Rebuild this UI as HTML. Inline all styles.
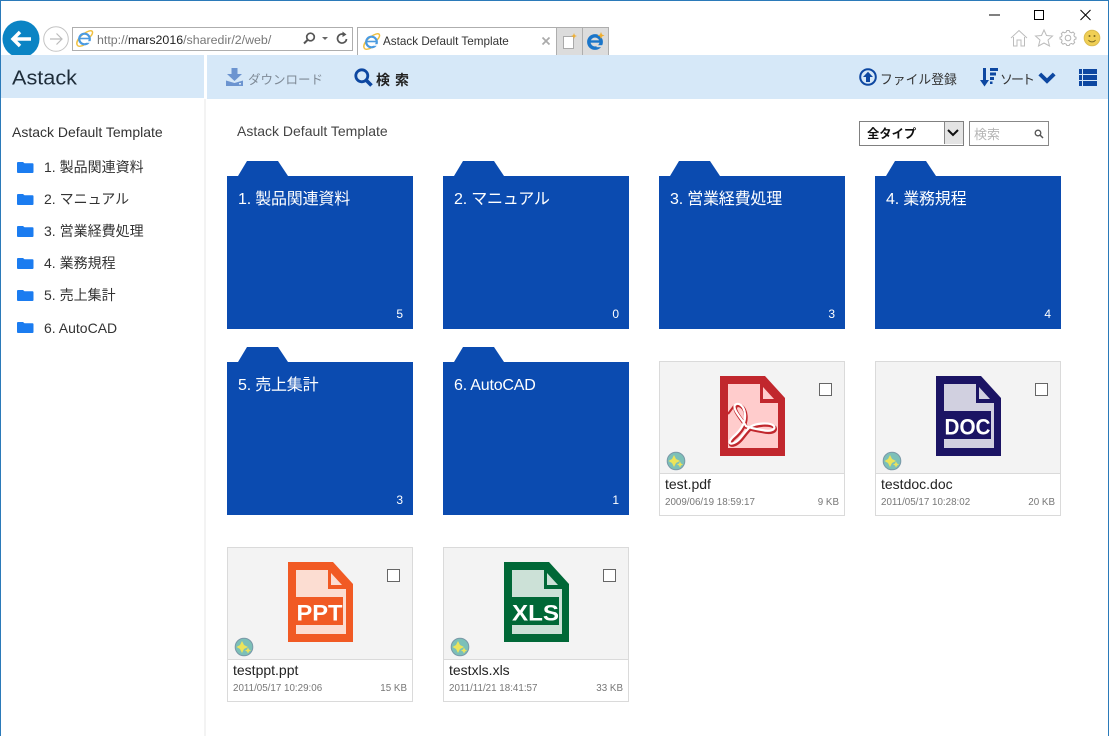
<!DOCTYPE html>
<html><head><meta charset="utf-8"><title>Astack Default Template</title>
<style>
html,body{margin:0;padding:0;width:1109px;height:736px;overflow:hidden;background:#fff}
body{position:relative;font-family:"Liberation Sans","Noto Sans CJK JP",sans-serif;color:#333}
.a,.f,.c,.t{position:absolute}
.t{white-space:nowrap;line-height:18px}
.f{width:186px;height:153px;background:#0b4bb0}
.f:before{content:"";position:absolute;left:11px;top:-15px;width:50px;height:15px;background:#0b4bb0;clip-path:polygon(0 100%,9px 0,40px 0,100% 100%)}
.f b{position:absolute;left:11px;top:14px;font-weight:400;font-size:16px;line-height:20px;color:#fff;white-space:nowrap;letter-spacing:-.2px}
.f i{position:absolute;right:10px;bottom:8px;font-style:normal;font-size:12px;line-height:14px;color:#fff}
.c{width:184px;height:153px;border:1px solid #dadada;background:#fff}
.c .g{position:absolute;left:0;top:0;width:184px;height:111px;background:#f3f3f3;border-bottom:1px solid #dadada}
.c svg.i{position:absolute;left:60px;top:14px}
.c .k{position:absolute;left:159px;top:21px;width:11px;height:11px;border:1px solid #666;background:#fff}
.c svg.b{position:absolute;left:6px;top:89px}
.c .n{position:absolute;left:5px;top:113px;font-size:14px;line-height:18px;color:#222}
.c .d{position:absolute;left:5px;top:134px;font-size:9.8px;line-height:13px;color:#777}
.c .s{position:absolute;right:5px;top:134px;font-size:9.8px;line-height:13px;color:#777}
.l{position:absolute;left:44px;font-size:14px;line-height:18px;color:#333;white-space:nowrap}
.fi{position:absolute;left:17px}
</style></head><body>
<!-- window border -->
<div class="a" style="left:0;top:0;width:1109px;height:1px;background:#2b7ab9"></div>
<div class="a" style="left:0;top:0;width:1px;height:736px;background:#2b7ab9"></div>
<div class="a" style="right:0;top:0;width:1px;height:736px;background:#2b7ab9"></div>

<!-- back/forward -->
<svg class="a" style="left:0;top:18px" width="72" height="38" viewBox="0 0 72 38">
<circle cx="21" cy="21" r="18.500" fill="#0b84c4"/>
<path d="M12.500 21H31M20 14L13 21L20 28" fill="none" stroke="#fff" stroke-width="3.500"/>
<circle cx="56" cy="21" r="12.300" fill="#fff" stroke="#c4c4c4"/>
<path d="M50 21H61M56.500 15.500L62 21L56.500 26.500" fill="none" stroke="#bbb" stroke-width="1.200"/>
</svg>
<!-- address bar -->
<div class="a" style="left:72px;top:27px;width:279px;height:22px;border:1px solid #aeaeae;background:#fff"></div>
<svg class="a" style="left:76px;top:30px" width="18" height="18" viewBox="0 0 18 18">
<path d="M1.500 15.500C-1 12 4 6 9 3C13 .5 16 0 16.500 2C16.800 3.500 15.500 5.500 14 7M1.500 15.500C3 17 6 16 8 15" fill="none" stroke="#f0c040" stroke-width="1.500"/>
<circle cx="8.500" cy="9" r="5.300" fill="none" stroke="#4a9ae0" stroke-width="2.200"/>
<path d="M4 8.500H13" stroke="#4a9ae0" stroke-width="1.600"/>
<path d="M14.500 12H10.500" stroke="#fff" stroke-width="1.600"/>
</svg>
<div class="t" style="left:97px;top:31px;font-size:12.400px;color:#777">http://<span style="color:#222">mars2016</span>/sharedir/2/web/</div>
<svg class="a" style="left:302px;top:30px" width="48" height="17" viewBox="0 0 48 17">
<circle cx="8.500" cy="7" r="3.800" fill="none" stroke="#555" stroke-width="1.700"/><path d="M5.500 10L2 13.500" stroke="#555" stroke-width="2"/>
<path d="M20 7H26L23 10Z" fill="#666"/>
<path d="M44.500 9A4.500 4.500 0 1 1 42 4.500" fill="none" stroke="#555" stroke-width="1.700"/><path d="M40.500 1.500L44.500 4.500L40.500 7Z" fill="#555"/>
</svg>
<!-- tab -->
<div class="a" style="left:357px;top:27px;width:199px;height:28px;border:1px solid #aeaeae;border-bottom:0;background:#fff;box-sizing:content-box"></div>
<svg class="a" style="left:363px;top:33px" width="18" height="18" viewBox="0 0 18 18">
<path d="M1.500 15.500C-1 12 4 6 9 3C13 .5 16 0 16.500 2C16.800 3.500 15.500 5.500 14 7M1.500 15.500C3 17 6 16 8 15" fill="none" stroke="#f0c040" stroke-width="1.500"/>
<circle cx="8.500" cy="9" r="5.300" fill="none" stroke="#4a9ae0" stroke-width="2.200"/>
<path d="M4 8.500H13" stroke="#4a9ae0" stroke-width="1.600"/>
<path d="M14.500 12H10.500" stroke="#fff" stroke-width="1.600"/>
</svg>
<div class="t" style="left:383px;top:33px;font-size:11.700px;color:#333">Astack Default Template</div>
<svg class="a" style="left:541px;top:36px" width="11" height="11" viewBox="0 0 11 11"><path d="M1.500 1.500L8.500 8.500M8.500 1.500L1.500 8.500" stroke="#aaa" stroke-width="1.700"/></svg>
<div class="a" style="left:556px;top:27px;width:53px;height:28px;background:#dcdcdc;border:1px solid #aeaeae;border-bottom:0;box-sizing:border-box"></div>
<div class="a" style="left:582px;top:27px;width:1px;height:28px;background:#aeaeae"></div>
<svg class="a" style="left:557px;top:28px" width="52" height="26" viewBox="0 0 52 26">
<path d="M6.500 8.500H16.500V20.500H6.500Z" fill="#fff" stroke="#aaa"/>
<path d="M17 5L17.800 7.200L20 8L17.800 8.800L17 11L16.200 8.800L14 8L16.200 7.200Z" fill="#f0ae2e"/>
<circle cx="38" cy="14" r="6.200" fill="none" stroke="#1a75c9" stroke-width="3.400"/>
<path d="M31 13.500H44" stroke="#1a75c9" stroke-width="2.400"/>
<path d="M39.500 18.200H46" stroke="#dcdcdc" stroke-width="2"/>
<path d="M44 4L45 6.500L47.500 7.500L45 8.500L44 11L43 8.500L40.500 7.500L43 6.500Z" fill="#f0ae2e"/>
</svg>
<!-- window controls -->
<svg class="a" style="left:985px;top:6px" width="112" height="20" viewBox="0 0 112 20">
<path d="M4 9H15" stroke="#000"/>
<rect x="49.500" y="4.500" width="9" height="9" fill="none" stroke="#000"/>
<path d="M95.500 4L105.500 14M105.500 4L95.500 14" stroke="#000"/>
</svg>
<!-- IE toolbar icons -->
<svg class="a" style="left:1009px;top:27px" width="96" height="22" viewBox="0 0 96 22">
<path d="M2 11L10 3.500L18 11M4.500 10V19H8V13H12V19H15.500V10" fill="none" stroke="#bcbcbc" stroke-width="1"/>
<path d="M35 3L37.500 8.500L43.500 9L39 13L40.500 19L35 16L29.500 19L31 13L26.500 9L32.500 8.500Z" fill="none" stroke="#bcbcbc" stroke-width="1"/>
<circle cx="59" cy="11" r="2.800" fill="none" stroke="#b5b5b5"/>
<path d="M57.800 4.500H60.200L60.700 6L62.500 6.800L64 6L65.700 7.700L64.900 9.200L65.500 10.700L67 11.200V13L65.500 13.500L64.900 15L65.700 16.500L64 18.200L62.500 17.400L60.700 18.200L60.200 19.500H57.800L57.300 18.200L55.500 17.400L54 18.200L52.300 16.500L53.100 15L52.500 13.500L51 13V11.200L52.500 10.700L53.100 9.200L52.300 7.700L54 6L55.500 6.800L57.300 6Z" fill="none" stroke="#b5b5b5" transform="translate(0 -1)"/>
<circle cx="83" cy="11" r="7.800" fill="#f0cf55" stroke="#dcbc50"/>
<circle cx="80.500" cy="9" r="1" fill="#7d6a20"/><circle cx="85.500" cy="9" r="1" fill="#7d6a20"/>
<path d="M79.500 13C81 15.500 85 15.500 86.500 13" fill="none" stroke="#7d6a20"/>
</svg>

<!-- app header -->
<div class="a" style="left:1px;top:55px;width:203px;height:43px;background:#d6e8f8"></div>
<div class="a" style="left:207px;top:55px;width:901px;height:44px;background:#d6e8f8"></div>
<svg class="a" style="left:10px;top:64px" width="72" height="28" viewBox="0 0 72 28"><text x="2" y="20.500" font-family="Liberation Sans,sans-serif" font-size="20" fill="#1f2d3a" textLength="65" lengthAdjust="spacingAndGlyphs">Astack</text></svg>
<svg class="a" style="left:225px;top:68px" width="20" height="19" viewBox="0 0 20 19">
<path d="M6.500 0H12.500V6H17L9.500 13L2 6H6.500Z" fill="#6c94d0"/>
<path d="M1 12.500L9.500 15L18 12.500V18H1Z" fill="#6c94d0"/>
<rect x="14" y="15" width="2" height="1.500" fill="#d6e8f8"/>
</svg>
<div class="t" style="left:248px;top:71px;font-size:12.500px;color:#7f8a96">ダウンロード</div>
<svg class="a" style="left:354px;top:68px" width="20" height="20" viewBox="0 0 20 20">
<circle cx="7.800" cy="7.800" r="6" fill="none" stroke="#0d47a1" stroke-width="2.800"/><path d="M12 12L17.500 17.500" stroke="#0d47a1" stroke-width="3.600"/>
</svg>
<div class="t" style="left:376px;top:71px;font-size:14px;font-weight:700;color:#222;letter-spacing:5px">検索</div>
<svg class="a" style="left:859px;top:68px" width="19" height="19" viewBox="0 0 19 19">
<circle cx="9" cy="9" r="7.800" fill="none" stroke="#0d47a1" stroke-width="2"/>
<path d="M9 3.800L14 9H11V14H7V9H4Z" fill="#0d47a1"/>
</svg>
<div class="t" style="left:880px;top:71px;font-size:12.800px;color:#333">ファイル登録</div>
<svg class="a" style="left:979px;top:68px" width="20" height="19" viewBox="0 0 20 19">
<path d="M4 0H7V12H10L5.500 18.500L1 12H4Z" fill="#0d47a1"/>
<path d="M11 0H19V3H11ZM11 4.500H17V7.500H11ZM11 9H15V12H11ZM11 13.500H13.500V16H11Z" fill="#0d47a1"/>
</svg>
<div class="t" style="left:1000px;top:71px;font-size:13px;color:#333;letter-spacing:-2px">ソート</div>
<svg class="a" style="left:1038px;top:71px" width="18" height="14" viewBox="0 0 18 14"><path d="M1.800 3L9 10L16.200 3" fill="none" stroke="#0d47a1" stroke-width="4"/></svg>
<svg class="a" style="left:1079px;top:69px" width="18" height="18" viewBox="0 0 18 18">
<path d="M0 0H3V5H0ZM4 0H18V5H4ZM0 6H3V11H0ZM4 6H18V11H4ZM0 12H3V17H0ZM4 12H18V17H4Z" fill="#0d47a1"/>
</svg>

<!-- sidebar -->
<div class="a" style="left:204px;top:99px;width:2px;height:637px;background:#f3f3f3"></div>
<div class="t" style="left:12px;top:123px;font-size:14px;color:#333">Astack Default Template</div>
<svg class="fi" style="top:160px" width="18" height="14" viewBox="0 0 18 14"><path d="M0 3Q0 2 1 2H6L7.500 3.200H15.500Q16.500 3.200 16.500 4.200V12Q16.500 13 15.500 13H1Q0 13 0 12Z" fill="#1b7cf0"/></svg>
<div class="l" style="top:158px">1. 製品関連資料</div>
<svg class="fi" style="top:192px" width="18" height="14" viewBox="0 0 18 14"><path d="M0 3Q0 2 1 2H6L7.500 3.200H15.500Q16.500 3.200 16.500 4.200V12Q16.500 13 15.500 13H1Q0 13 0 12Z" fill="#1b7cf0"/></svg>
<div class="l" style="top:190px">2. マニュアル</div>
<svg class="fi" style="top:224px" width="18" height="14" viewBox="0 0 18 14"><path d="M0 3Q0 2 1 2H6L7.500 3.200H15.500Q16.500 3.200 16.500 4.200V12Q16.500 13 15.500 13H1Q0 13 0 12Z" fill="#1b7cf0"/></svg>
<div class="l" style="top:222px">3. 営業経費処理</div>
<svg class="fi" style="top:256px" width="18" height="14" viewBox="0 0 18 14"><path d="M0 3Q0 2 1 2H6L7.500 3.200H15.500Q16.500 3.200 16.500 4.200V12Q16.500 13 15.500 13H1Q0 13 0 12Z" fill="#1b7cf0"/></svg>
<div class="l" style="top:254px">4. 業務規程</div>
<svg class="fi" style="top:288px" width="18" height="14" viewBox="0 0 18 14"><path d="M0 3Q0 2 1 2H6L7.500 3.200H15.500Q16.500 3.200 16.500 4.200V12Q16.500 13 15.500 13H1Q0 13 0 12Z" fill="#1b7cf0"/></svg>
<div class="l" style="top:286px">5. 売上集計</div>
<svg class="fi" style="top:320px" width="18" height="14" viewBox="0 0 18 14"><path d="M0 3Q0 2 1 2H6L7.500 3.200H15.500Q16.500 3.200 16.500 4.200V12Q16.500 13 15.500 13H1Q0 13 0 12Z" fill="#1b7cf0"/></svg>
<div class="l" style="top:319px">6. AutoCAD</div>

<!-- main -->
<div class="t" style="left:237px;top:122px;font-size:14px;color:#444">Astack Default Template</div>
<div class="a" style="left:859px;top:121px;width:103px;height:23px;border:1px solid #808080;background:#fff"></div>
<div class="t" style="left:867px;top:125px;font-size:12.300px;font-weight:700;color:#111">全タイプ</div>
<div class="a" style="left:944px;top:122px;width:18px;height:22px;background:#e4e4e4;border-left:1px solid #888"></div>
<svg class="a" style="left:946px;top:128px" width="14" height="10" viewBox="0 0 14 10"><path d="M2 2L7 7L12 2" fill="none" stroke="#111" stroke-width="2"/></svg>
<div class="a" style="left:969px;top:121px;width:78px;height:23px;border:1px solid #888;background:#fff"></div>
<div class="t" style="left:974px;top:126px;font-size:13px;color:#b5b5b5">検索</div>
<svg class="a" style="left:1034px;top:129px" width="10" height="10" viewBox="0 0 10 10"><circle cx="4" cy="4" r="2.800" fill="none" stroke="#555" stroke-width="1.300"/><path d="M6 6L9 9" stroke="#555" stroke-width="1.500"/></svg>

<div class="f" style="left:227px;top:176px"><b style="top:14px">1. 製品関連資料</b><i>5</i></div>
<div class="f" style="left:443px;top:176px"><b>2. マニュアル</b><i>0</i></div>
<div class="f" style="left:659px;top:176px"><b>3. 営業経費処理</b><i>3</i></div>
<div class="f" style="left:875px;top:176px"><b>4. 業務規程</b><i>4</i></div>
<div class="f" style="left:227px;top:362px"><b>5. 売上集計</b><i>3</i></div>
<div class="f" style="left:443px;top:362px"><b>6. AutoCAD</b><i>1</i></div>

<div class="c" style="left:659px;top:361px"><div class="g"></div>
<svg class="i" width="65" height="80" viewBox="0 0 65 80">
<path d="M0 0H45L65 22V80H0Z" fill="#c1272d"/>
<path d="M8 8H40V27H58V72H8Z" fill="#ffcccc"/>
<path d="M43 11L54 23H43Z" fill="#ffcccc"/>
<path d="M8 38L14 30" stroke="#c1272d" stroke-width="2"/>
<path d="M26 50C22 43 12 33 15 29C18 26 24 29 25 38C26 47 20 55 13 61C8 66 9 69 14 67C20 65 24 56 30 51C36 47 50 46 54 50C56 54 50 56 42 54C36 53 30 52 26 50Z" fill="none" stroke="#c1272d" stroke-width="3.600" transform="translate(.8 1.500)"/>
<path d="M26 50C22 43 12 33 15 29C18 26 24 29 25 38C26 47 20 55 13 61C8 66 9 69 14 67C20 65 24 56 30 51C36 47 50 46 54 50C56 54 50 56 42 54C36 53 30 52 26 50Z" fill="none" stroke="#fff" stroke-width="2.200"/>
</svg>
<div class="k"></div>
<svg class="b" width="20" height="20" viewBox="0 0 20 20"><circle cx="10" cy="10" r="8.800" fill="#7cc0b8" stroke="#7a98a8" stroke-width="1"/><path d="M8 4L10 8L14 10L10 12L8 16L6 12L2.500 10L6 8Z" fill="#ece45a"/><path d="M14 10.500L15 12.500L17 13.500L15 14.500L14 16.500L13 14.500L11 13.500L13 12.500Z" fill="#ece45a"/></svg>
<div class="n">test.pdf</div><div class="d">2009/06/19 18:59:17</div><div class="s">9 KB</div></div>

<div class="c" style="left:875px;top:361px"><div class="g"></div>
<svg class="i" width="65" height="80" viewBox="0 0 65 80">
<path d="M0 0H45L65 22V80H0Z" fill="#1b1464"/>
<path d="M8 8H40V27H58V72H8Z" fill="#d1d0e0"/>
<path d="M43 11L54 23H43Z" fill="#d1d0e0"/>
<rect x="0" y="35" width="55" height="28" fill="#1b1464"/>
<text x="8.500" y="58.500" font-family="Liberation Sans,sans-serif" font-weight="700" font-size="22.500" fill="#fff" textLength="46" lengthAdjust="spacingAndGlyphs">DOC</text>
</svg>
<div class="k"></div>
<svg class="b" width="20" height="20" viewBox="0 0 20 20"><circle cx="10" cy="10" r="8.800" fill="#7cc0b8" stroke="#7a98a8" stroke-width="1"/><path d="M8 4L10 8L14 10L10 12L8 16L6 12L2.500 10L6 8Z" fill="#ece45a"/><path d="M14 10.500L15 12.500L17 13.500L15 14.500L14 16.500L13 14.500L11 13.500L13 12.500Z" fill="#ece45a"/></svg>
<div class="n">testdoc.doc</div><div class="d">2011/05/17 10:28:02</div><div class="s">20 KB</div></div>

<div class="c" style="left:227px;top:547px"><div class="g"></div>
<svg class="i" width="65" height="80" viewBox="0 0 65 80">
<path d="M0 0H45L65 22V80H0Z" fill="#f15a24"/>
<path d="M8 8H40V27H58V72H8Z" fill="#fcddd2"/>
<path d="M43 11L54 23H43Z" fill="#fcddd2"/>
<rect x="0" y="35" width="55" height="28" fill="#f15a24"/>
<text x="8.500" y="58.500" font-family="Liberation Sans,sans-serif" font-weight="700" font-size="22.500" fill="#fff" textLength="46" lengthAdjust="spacingAndGlyphs">PPT</text>
</svg>
<div class="k"></div>
<svg class="b" width="20" height="20" viewBox="0 0 20 20"><circle cx="10" cy="10" r="8.800" fill="#7cc0b8" stroke="#7a98a8" stroke-width="1"/><path d="M8 4L10 8L14 10L10 12L8 16L6 12L2.500 10L6 8Z" fill="#ece45a"/><path d="M14 10.500L15 12.500L17 13.500L15 14.500L14 16.500L13 14.500L11 13.500L13 12.500Z" fill="#ece45a"/></svg>
<div class="n">testppt.ppt</div><div class="d">2011/05/17 10:29:06</div><div class="s">15 KB</div></div>

<div class="c" style="left:443px;top:547px"><div class="g"></div>
<svg class="i" width="65" height="80" viewBox="0 0 65 80">
<path d="M0 0H45L65 22V80H0Z" fill="#006837"/>
<path d="M8 8H40V27H58V72H8Z" fill="#cce1d7"/>
<path d="M43 11L54 23H43Z" fill="#cce1d7"/>
<rect x="0" y="35" width="55" height="28" fill="#006837"/>
<text x="8" y="58.500" font-family="Liberation Sans,sans-serif" font-weight="700" font-size="22.500" fill="#fff" textLength="47" lengthAdjust="spacingAndGlyphs">XLS</text>
</svg>
<div class="k"></div>
<svg class="b" width="20" height="20" viewBox="0 0 20 20"><circle cx="10" cy="10" r="8.800" fill="#7cc0b8" stroke="#7a98a8" stroke-width="1"/><path d="M8 4L10 8L14 10L10 12L8 16L6 12L2.500 10L6 8Z" fill="#ece45a"/><path d="M14 10.500L15 12.500L17 13.500L15 14.500L14 16.500L13 14.500L11 13.500L13 12.500Z" fill="#ece45a"/></svg>
<div class="n">testxls.xls</div><div class="d">2011/11/21 18:41:57</div><div class="s">33 KB</div></div>
</body></html>
